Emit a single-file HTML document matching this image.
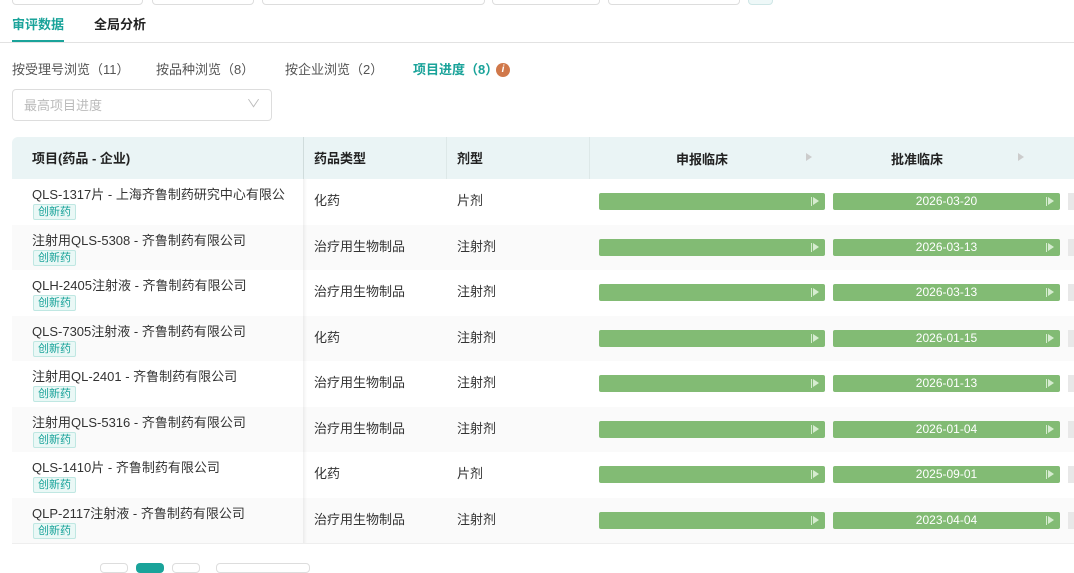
<!DOCTYPE html><html><head><meta charset="utf-8"><style>
*{box-sizing:border-box;margin:0;padding:0}
body{width:1074px;height:567px;overflow:hidden;background:#fff;font-family:"Liberation Sans","Noto Sans CJK SC",sans-serif;color:#333;position:relative}
.a{position:absolute}
.box{position:absolute;top:-6px;height:11px;border:1px solid #ddd;border-radius:4px}
.row{position:absolute;left:12px;width:1062px;height:45.5px}
.row.alt{background:#fafafa}
.t{position:absolute;font-size:13px;color:#333;white-space:nowrap}
.tag{position:absolute;left:21px;font-size:11px;color:#1aa39a;background:#eaf8f6;border:1px solid #bfe7e2;padding:0 4px;line-height:14px;border-radius:2px}
.bar{position:absolute;height:17px;background:#82bb74;border-radius:2px;color:#fff;font-size:12px;text-align:center;line-height:17px}
.bar:after{content:"";position:absolute;right:6px;top:4px;width:0;height:0;border-left:6px solid #d6ecd0;border-top:4.5px solid transparent;border-bottom:4.5px solid transparent}
.bar:before{content:"";position:absolute;right:13px;top:4px;width:1.5px;height:9px;background:#d6ecd0}
.gr{position:absolute;left:1056px;width:8px;height:17px;background:#e8e8e8}
</style></head><body>
<div class="box" style="left:12px;width:131px"></div>
<div class="box" style="left:152px;width:102px"></div>
<div class="box" style="left:262px;width:223px"></div>
<div class="box" style="left:492px;width:108px"></div>
<div class="box" style="left:608px;width:132px"></div>
<div class="box" style="left:748px;width:25px;background:#eef8f8;border-color:#cfe6e6"></div>

<div class="a" style="left:12px;top:14px;font-size:13px;font-weight:bold;color:#1aa39a">审评数据</div>
<div class="a" style="left:94px;top:14px;font-size:13px;font-weight:bold;color:#222">全局分析</div>
<div class="a" style="left:12px;top:40px;width:52px;height:3px;background:#1aa39a"></div>
<div class="a" style="left:0;top:42px;width:1074px;height:1px;background:#e2e2e2"></div>

<div class="a" style="left:12px;top:59px;font-size:13px;color:#555">按受理号浏览（11）</div>
<div class="a" style="left:156px;top:59px;font-size:13px;color:#555">按品种浏览（8）</div>
<div class="a" style="left:285px;top:59px;font-size:13px;color:#555">按企业浏览（2）</div>
<div class="a" style="left:413px;top:59px;font-size:13px;color:#1aa39a;font-weight:bold">项目进度（8）</div>
<div class="a" style="left:496px;top:63px;width:14px;height:14px;border-radius:50%;background:#d0784a;color:#fff;font-size:10px;font-style:italic;text-align:center;line-height:14px;font-weight:bold">i</div>

<div class="a" style="left:12px;top:89px;width:260px;height:32px;border:1px solid #ddd;border-radius:4px"></div>
<div class="a" style="left:24px;top:95px;font-size:13px;color:#bbb">最高项目进度</div>
<div class="a" style="left:248px;top:95px;font-size:11px;color:#bbb;transform:scaleX(1.3)">∨</div>

<div class="a" style="left:12px;top:137px;width:1062px;height:42px;background:#eaf4f5;border-radius:6px 0 0 0"></div>
<div class="a" style="left:303px;top:137px;width:1px;height:42px;background:#d0dcdc"></div>
<div class="a" style="left:446px;top:137px;width:1px;height:42px;background:#dde8e8"></div>
<div class="a" style="left:589px;top:137px;width:1px;height:42px;background:#dde8e8"></div>
<div class="a" style="left:32px;top:148px;font-size:13px;font-weight:bold;color:#222">项目(药品 - 企业)</div>
<div class="a" style="left:314px;top:148px;font-size:13px;font-weight:bold;color:#222">药品类型</div>
<div class="a" style="left:457px;top:148px;font-size:13px;font-weight:bold;color:#222">剂型</div>
<div class="a" style="left:676px;top:149px;font-size:13px;font-weight:bold;color:#222">申报临床</div>
<div class="a" style="left:891px;top:149px;font-size:13px;font-weight:bold;color:#222">批准临床</div>
<div class="a" style="left:806px;top:153px;border-left:6px solid #ccc;border-top:4px solid transparent;border-bottom:4px solid transparent"></div>
<div class="a" style="left:1018px;top:153px;border-left:6px solid #ccc;border-top:4px solid transparent;border-bottom:4px solid transparent"></div>

<div id="rows"></div>
<div class="a" style="left:303px;top:179px;width:4px;height:364px;background:linear-gradient(90deg,rgba(0,0,0,.06),rgba(0,0,0,0))"></div>
<div class="a" style="left:12px;top:543px;width:1062px;height:1px;background:#eee"></div>

<div class="a" style="left:100px;top:563px;width:28px;height:10px;border:1px solid #ddd;border-radius:4px"></div>
<div class="a" style="left:136px;top:563px;width:28px;height:10px;background:#1aa39a;border-radius:4px"></div>
<div class="a" style="left:172px;top:563px;width:28px;height:10px;border:1px solid #ddd;border-radius:4px"></div>
<div class="a" style="left:216px;top:563px;width:94px;height:10px;border:1px solid #ddd;border-radius:4px"></div>

<script>
var d=[["QLS-1317片 - 上海齐鲁制药研究中心有限公","化药","片剂","2026-03-20"],
["注射用QLS-5308 - 齐鲁制药有限公司","治疗用生物制品","注射剂","2026-03-13"],
["QLH-2405注射液 - 齐鲁制药有限公司","治疗用生物制品","注射剂","2026-03-13"],
["QLS-7305注射液 - 齐鲁制药有限公司","化药","注射剂","2026-01-15"],
["注射用QL-2401 - 齐鲁制药有限公司","治疗用生物制品","注射剂","2026-01-13"],
["注射用QLS-5316 - 齐鲁制药有限公司","治疗用生物制品","注射剂","2026-01-04"],
["QLS-1410片 - 齐鲁制药有限公司","化药","片剂","2025-09-01"],
["QLP-2117注射液 - 齐鲁制药有限公司","治疗用生物制品","注射剂","2023-04-04"]];
var h="";
d.forEach(function(r,i){
var top=179+i*45.5;
h+='<div class="row'+(i%2?' alt':'')+'" style="top:'+top+'px">'+
'<div class="t" style="left:20px;top:5px">'+r[0]+'</div>'+
'<div class="tag" style="top:25px">创新药</div>'+
'<div class="t" style="left:302px;top:11px">'+r[1]+'</div>'+
'<div class="t" style="left:445px;top:11px">'+r[2]+'</div>'+
'<div class="bar" style="left:587px;width:226px;top:14px"></div>'+
'<div class="bar" style="left:821px;width:227px;top:14px">'+r[3]+'</div>'+
'<div class="gr" style="top:14px"></div></div>';});
document.getElementById("rows").innerHTML=h;
</script>
</body></html>
